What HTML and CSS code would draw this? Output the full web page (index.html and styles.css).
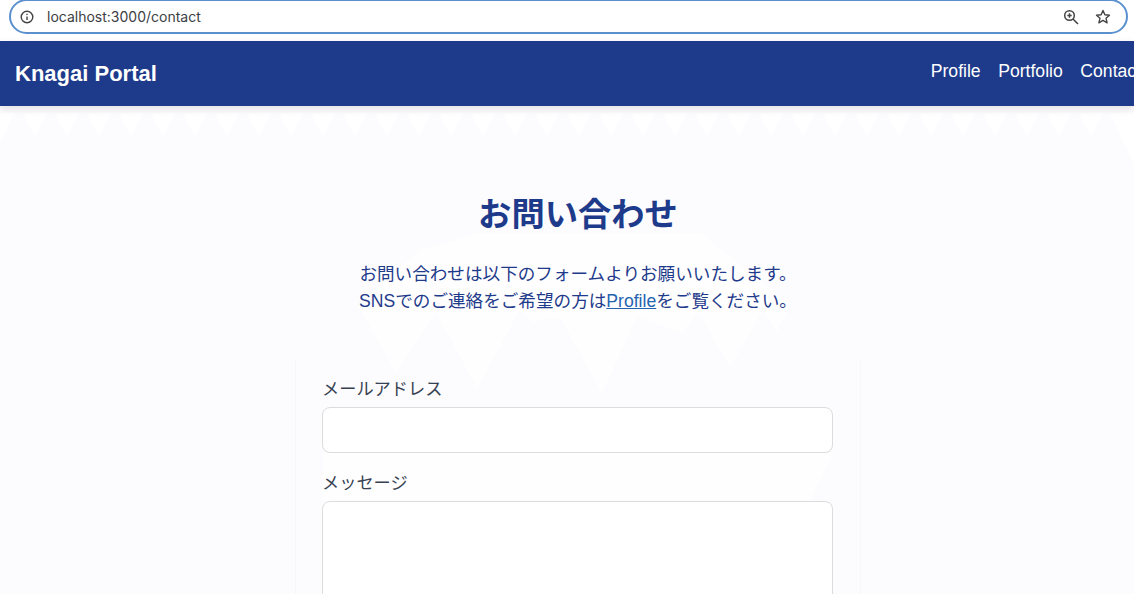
FILE: index.html
```html
<!DOCTYPE html>
<html lang="ja">
<head>
  <meta charset="UTF-8">
  <title>Knagai Portal</title>
  <link rel="stylesheet" href="styles.css">
</head>
<body>

<div class="browser-bar">
  <div class="url-box">
    <svg class="url-icon" width="16" height="16" viewBox="0 0 16 16" fill="none" stroke="#444" stroke-width="1.4">
      <circle cx="8" cy="8" r="5.8"/>
      <path d="M8 7.4v3.6M8 4.8v1.3"/>
    </svg>
    <span class="url-text">localhost:3000/contact</span>
    <svg class="url-zoom" width="18" height="18" viewBox="0 0 18 18" fill="none" stroke="#444" stroke-width="1.5">
      <circle cx="7.5" cy="7.5" r="4.8"/>
      <path d="M11 11l5 5M7.5 5.3v4.4M5.3 7.5h4.4"/>
    </svg>
    <svg class="url-star" width="18" height="18" viewBox="0 0 18 18" fill="none" stroke="#444" stroke-width="1.4" stroke-linejoin="round">
      <path d="M9 2.5l1.9 4.3 4.6.4-3.5 3 1.1 4.6L9 12.4l-4.1 2.4L6 10.2l-3.5-3 4.6-.4z"/>
    </svg>
  </div>
</div>

<header class="site-header">
  <a class="brand" href="#">Knagai Portal</a>
  <nav class="site-nav">
    <a href="#">Profile</a>
    <a href="#">Portfolio</a>
    <a href="#">Contact</a>
  </nav>
</header>

<main class="page">
  <!-- 背景の模様 -->
  <svg class="page-bg" width="1134" height="488" viewBox="0 106 1134 488" fill="#fff">
    <defs>
      <pattern id="teeth" x="19" y="113" width="32" height="24" patternUnits="userSpaceOnUse">
        <polygon points="5,1 27,1 16,21" stroke="#fff" stroke-width="2" stroke-linejoin="round"/>
      </pattern>
    </defs>
    <rect x="19" y="113" width="1088" height="24" fill="url(#teeth)"/>
    <polygon points="0,113 14,113 0,143"/>
    <polygon points="1110,113 1134,113 1134,165"/>
    <polygon fill-opacity="0.7" points="358,306 396,372 436,312 477,388 520,310 533,322 560,317 602,393 637,317 683,333 698,312 730,367 763,310 777,332 790,305 700,233 578,233 480,233 420,250"/>
    <polygon fill-opacity="0.6" points="323,453 833,453 810,500 323,500"/>
  </svg>

  <div class="content">
    <h1 class="page-title">お問い合わせ</h1>
    <p class="lead">
      お問い合わせは以下のフォームよりお願いいたします。<br>
      SNSでのご連絡をご希望の方は<a href="#">Profile</a>をご覧ください。
    </p>

    <form class="contact-form">
      <label class="field-label" for="email">メールアドレス</label>
      <input class="field-input" type="email" id="email">
      <label class="field-label" for="message">メッセージ</label>
      <textarea class="field-input field-text" id="message"></textarea>
    </form>
  </div>
</main>

</body>
</html>
```

FILE: styles.css
```css
* {
  box-sizing: border-box;
}

html, body {
  margin: 0;
  padding: 0;
  height: 594px;
  overflow: hidden;
}

body {
  background: #fcfcfe;
  color: #1e3a8a;
  font-family: "Liberation Sans", "Noto Sans CJK JP", sans-serif;
}

.browser-bar {
  height: 41px;
  background: #fff;
  padding: 0 6px 0 9px;
}

.url-box {
  height: 35px;
  padding: 0 14px 0 8px;
  background: #fff;
  border: 2px solid #5b90cf;
  border-radius: 18px;
  display: flex;
  align-items: center;
  position: relative;
  top: -1px;
}

.url-text {
  flex: 1;
  margin-left: 12px;
  font-family: Inter, "Liberation Sans", sans-serif;
  font-size: 14px;
  color: #3c4043;
}

.url-star {
  margin-left: 14px;
}

.site-header {
  height: 65px;
  background: #1e3a8a;
  box-shadow: 0 3px 8px rgba(0, 0, 0, 0.1);
  padding: 0 0 0 15px;
  display: flex;
  align-items: center;
  justify-content: space-between;
  position: relative;
  z-index: 2;
  white-space: nowrap;
}

.brand {
  color: #fff;
  font-size: 22px;
  font-weight: 700;
  text-decoration: none;
}

.site-nav {
  display: flex;
  gap: 17.6px;
  margin-right: -7px;
  padding-bottom: 4px;
}

.site-nav a {
  color: #fff;
  font-size: 17.6px;
  text-decoration: none;
}

.page {
  height: 488px;
  position: relative;
  overflow: hidden;
}

.page-bg {
  position: absolute;
  top: 0;
  left: 0;
}

.content {
  position: relative;
  width: 566px;
  margin-left: 295px;
  padding-top: 88px;
}

.page-title {
  margin: 0;
  text-align: center;
  font-size: 33.3px;
  line-height: 42px;
  font-weight: 700;
  color: #1e3a8a;
}

.lead {
  margin: 25px 0 0;
  text-align: center;
  font-size: 17.6px;
  line-height: 27px;
  color: #1e3a8a;
}

.lead a {
  color: #2563b0;
  text-decoration: underline;
}

.contact-form {
  margin-top: 44px;
  padding: 18px 27px 0 26px;
  border-left: 1px solid #f6f7f9;
  border-right: 1px solid #f6f7f9;
  height: 240px;
}

.field-label {
  display: block;
  font-size: 17.2px;
  line-height: 24px;
  color: #374151;
  margin-bottom: 6px;
}

.field-input {
  display: block;
  width: 100%;
  height: 46px;
  margin-bottom: 18px;
  background: #fff;
  border: 1px solid #dcdcdc;
  border-radius: 8px;
  outline: none;
}

.field-text {
  height: 150px;
  resize: none;
}
```
